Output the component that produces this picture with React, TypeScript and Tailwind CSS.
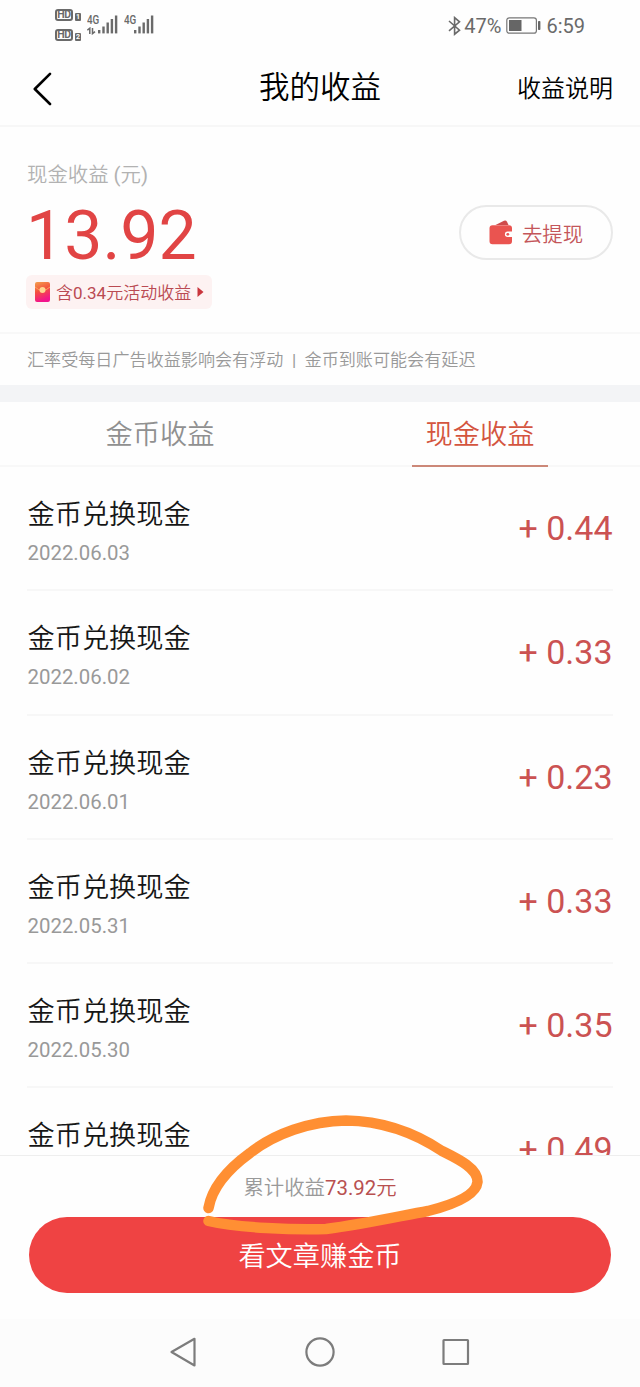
import React from 'react';

interface Income {
    title: string;
    date?: string;
    amount: string;
}

const incomes: Income[] = [
    { title: '金币兑换现金', date: '2022.06.03', amount: '0.44' },
    { title: '金币兑换现金', date: '2022.06.02', amount: '0.33' },
    { title: '金币兑换现金', date: '2022.06.01', amount: '0.23' },
    { title: '金币兑换现金', date: '2022.05.31', amount: '0.33' },
    { title: '金币兑换现金', date: '2022.05.30', amount: '0.35' },
    { title: '金币兑换现金', amount: '0.49' },
];

const HdBadge = ({ slot }: { slot: string }) => (
    <div className="flex items-end gap-[2px] h-[12px]">
        <span className="flex items-center justify-center w-[18px] h-[12px] rounded-[3px] border-2 border-[#6a6a6a] text-[10.5px] leading-[8px] tracking-[-0.3px] font-bold text-[#6a6a6a]">HD</span>
        <span className="flex items-center justify-center w-[6px] h-[8px] rounded-[1px] bg-[#6a6a6a] text-[7px] leading-none font-bold text-white">{slot}</span>
    </div>
);

const SignalBars = () => (
    <svg width="20" height="19" viewBox="0 0 20 19" fill="#6a6a6a">
        <rect x="0" y="15" width="2.4" height="3.4" />
        <rect x="4.3" y="11.5" width="2.4" height="6.9" />
        <rect x="8.5" y="7.5" width="2.4" height="10.9" />
        <rect x="12.7" y="4" width="2.4" height="14.4" />
        <rect x="16.9" y="0.5" width="2.4" height="17.9" />
    </svg>
);

const StatusBar = () => (
    <div className="flex items-start justify-between h-[50px] pl-[55px] pr-[55px] text-[#6a6a6a]">
        <div className="flex items-start">
            <div className="flex flex-col gap-[8px] pt-[9px]">
                <HdBadge slot="1" />
                <HdBadge slot="2" />
            </div>
            <div className="flex flex-col w-[11px] ml-[6px] pt-[14px]">
                <span className="origin-left scale-x-[0.82] text-[12px] leading-[12px] font-medium">4G</span>
                <svg className="mt-[1px]" width="9" height="8" viewBox="0 0 9 8" fill="none" stroke="#6a6a6a" strokeWidth="1.5">
                    <path d="M0.3 3.2L2.8 1.2V7M5.5 1V6.6L8 4.6" />
                </svg>
            </div>
            <div className="pt-[15px]"><SignalBars /></div>
            <span className="origin-left scale-x-[0.82] text-[12px] leading-[12px] font-medium w-[10px] ml-[6px] mt-[14px]">4G</span>
            <div className="pt-[15px]"><SignalBars /></div>
        </div>
        <div className="flex items-center h-[52px] text-[20px]">
            <svg width="13" height="20" viewBox="0 0 13 20" fill="none" stroke="#6a6a6a" strokeWidth="1.6">
                <path d="M1 5L11.5 14.2L6.6 18.2V1.6L11.5 5.8L1 14.8" />
            </svg>
            <span className="ml-[3px]">47%</span>
            <svg className="ml-[5px] -mt-[2px]" width="35" height="17" viewBox="0 0 35 17" fill="none">
                <rect x="0.8" y="0.8" width="29.6" height="15.4" rx="2.5" stroke="#777" strokeWidth="1.2" />
                <rect x="3" y="3" width="12.5" height="11" fill="#666" />
                <rect x="32" y="4" width="2.4" height="9" rx="0.8" fill="#666" />
            </svg>
            <span className="ml-[5px]">6:59</span>
        </div>
    </div>
);

const Header = () => (
    <div className="grid grid-cols-3 items-center h-[77px] px-[27px] border-b-2 border-[#f7f7f7] text-black">
        <svg className="ml-[6px] mt-[2px]" width="20" height="34" viewBox="0 0 20 34" fill="none" stroke="#000" strokeWidth="2.6" strokeLinecap="round" strokeLinejoin="round">
            <path d="M17 1.8L1.8 17L17 32" />
        </svg>
        <h1 className="pt-[2px] text-center text-[30.5px] leading-none whitespace-nowrap">我的收益</h1>
        <span className="pt-[2px] text-right text-[24px] leading-none">收益说明</span>
    </div>
);

const Balance = () => (
    <div className="flex justify-between h-[207px] px-[27px] border-b-2 border-[#f8f8f8]">
        <div className="flex flex-col items-start">
            <span className="mt-[33px] text-[20.4px] leading-[30px] text-[#b2b2b2]">现金收益 (元)</span>
            <span className="mt-[12px] -ml-[1px] text-[68px] leading-[68px] text-[#e14444]">13.92</span>
            <div className="flex items-center h-[34px] mt-[5px] -ml-[1px] pl-[9px] w-[186px] rounded-[6px] bg-[#fdf2f2] text-[17px] leading-none text-[#ba4a52]">
                <svg width="15" height="20" viewBox="0 0 15 20">
                    <defs>
                        <linearGradient id="packet" x1="0" y1="0" x2="0.3" y2="1">
                            <stop offset="0" stopColor="#f3a04c" />
                            <stop offset="0.5" stopColor="#f4503f" />
                            <stop offset="1" stopColor="#f2148c" />
                        </linearGradient>
                    </defs>
                    <rect width="15" height="20" rx="2" fill="url(#packet)" />
                    <path d="M0 5Q7.5 12 15 5" fill="none" stroke="#f9a65a" strokeWidth="1" />
                    <circle cx="7.5" cy="8" r="3" fill="#ffd591" />
                </svg>
                <span className="ml-[6px] pt-[3px] whitespace-nowrap">含0.34元活动收益</span>
                <svg className="ml-[6px]" width="7" height="10" viewBox="0 0 7 10" fill="#c9353d">
                    <path d="M0.5 0L6.5 5L0.5 10Z" />
                </svg>
            </div>
        </div>
        <button className="flex items-center justify-center w-[154px] h-[55px] mt-[78px] rounded-full border-2 border-[#e9e9e9] text-[20.4px] leading-none text-[#c4565a]">
            <svg width="24" height="25" viewBox="0 0 24 25">
                <path d="M6.5 5L15 0.8Q17 0 18 1.8L19.5 5Z" fill="#cf4b4b" />
                <path d="M3.5 5.3H20Q23 5.3 23 8.3V11.6H18.6A2.6 2.6 0 0 0 18.6 17H23V21.3Q23 24.3 20 24.3H3.5Q0.5 24.3 0.5 21.3V8.3Q0.5 5.3 3.5 5.3Z" fill="#ea5450" />
                <circle cx="18.8" cy="14.3" r="1.4" fill="#ea5450" />
            </svg>
            <span className="ml-[9px] pt-[5px]">去提现</span>
        </button>
    </div>
);

const Tabs = () => (
    <div className="flex h-[65px] border-b-2 border-[#f8f8f8] text-[27.2px] leading-none">
        <div className="flex items-center justify-center w-1/2 pt-[5px] text-[#909090]">金币收益</div>
        <div className="flex justify-center w-1/2">
            <div className="flex items-center justify-center w-[136px] h-[65px] border-b-2 border-[#cc8878] text-[#d4553f] pt-[4px]">现金收益</div>
        </div>
    </div>
);

const IncomeRow = ({ title, date, amount }: Income) => (
    <div className="flex shrink-0 items-start justify-between h-[124.3px] border-b-2 border-[#f7f7f7]">
        <div className="flex flex-col pt-[28px]">
            <span className="pl-[0.5px] text-[27.2px] leading-[40px] text-[#161616]">{title}</span>
            {date && <span className="mt-[3px] pl-[0.5px] text-[20.4px] leading-[30px] text-[#999]">{date}</span>}
        </div>
        <span className="pt-[44px] pr-[0.5px] text-[34px] leading-[34px] text-[#cb5252]">+ {amount}</span>
    </div>
);

const Footer = () => (
    <div className="relative flex flex-col items-center h-[164px] border-t border-[#eee]">
        <p className="mt-[17px] text-[20.4px] leading-[30px] text-[#999]">
            累计收益<span className="text-[#b85050]">73.92元</span>
        </p>
        <button className="w-[582px] h-[76px] mt-[14px] pt-[5px] rounded-full bg-[#ef4343] text-[27.2px] leading-none text-white">看文章赚金币</button>
        {/* hand drawn circle around the total */}
        <svg className="absolute left-[196px] top-[-47px]" width="296" height="132" viewBox="196 1109 296 132" fill="none" stroke="#ff8f33" strokeWidth="10.5" strokeLinecap="round" strokeLinejoin="round">
            <path d="M208.500 1208C212 1188 228 1169 250 1153C274 1134 310 1121 346 1120.500C382 1121 415 1133 442 1151C456 1158 478 1168 477.500 1182C476 1197 448 1206 428 1211C400 1216 365 1224 326 1229C295 1230 238 1228 208.500 1221" />
        </svg>
    </div>
);

const NavBar = () => (
    <div className="flex h-[68px] bg-[#fcfcfc]">
        <svg width="640" height="68" viewBox="0 0 640 68" fill="none" stroke="#7c7c7c" strokeWidth="2.2" strokeLinejoin="round">
            <path d="M171.500 33L194.500 19.800V46.500Z" />
            <circle cx="320" cy="33" r="13.6" />
            <rect x="443.5" y="21" width="24.5" height="24" rx="0.5" />
        </svg>
    </div>
);

export default function App() {
    return (
        <div className="flex flex-col w-[640px] h-[1387px] overflow-hidden bg-[#fefefe] font-[Roboto,'Noto_Sans_CJK_SC_DemiLight','Noto_Sans_CJK_SC',sans-serif]">
            <StatusBar />
            <Header />
            <Balance />
            <div className="flex items-center h-[51px] pl-[27px] pt-[3px] text-[17.1px] leading-none text-[#999] whitespace-pre">汇率受每日广告收益影响会有浮动  |  金币到账可能会有延迟</div>
            <div className="h-[17px] bg-[#f3f4f6]" />
            <Tabs />
            <div className="flex flex-col h-[688px] px-[27px] overflow-hidden">
                {incomes.map((income, index) => (
                    <IncomeRow key={index} {...income} />
                ))}
            </div>
            <Footer />
            <NavBar />
        </div>
    );
}
